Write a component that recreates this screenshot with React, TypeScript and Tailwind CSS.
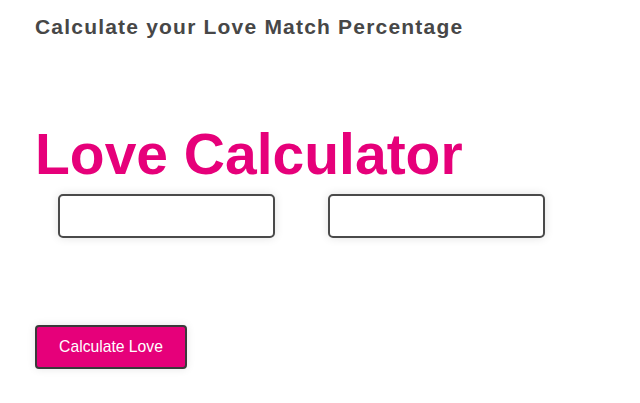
export default function App() {
  return (
    <div className="min-h-screen bg-white px-[35px] pt-[15px] font-['Liberation_Sans',Arial,sans-serif]">
      <h3 className="text-[21px] leading-[24px] font-bold tracking-[1.2px] text-[#474747]">
        Calculate your Love Match Percentage
      </h3>

      <h1 className="mt-[83px] text-[57px] leading-[64px] font-bold text-[#e6007a]">
        Love Calculator
      </h1>

      <div className="mt-[8px] flex gap-[53px] pl-[23px]">
        <input
          type="text"
          className="h-[44px] w-[217px] rounded-[5px] border-2 border-[#4a4a4a] bg-white shadow-[0_0_10px_rgba(0,0,0,0.12)] outline-none"
        />
        <input
          type="text"
          className="h-[44px] w-[217px] rounded-[5px] border-2 border-[#4a4a4a] bg-white shadow-[0_0_10px_rgba(0,0,0,0.12)] outline-none"
        />
      </div>

      <button className="mt-[87px] h-[44px] w-[152px] rounded-[4px] border-2 border-[#3a3a3a] bg-[#e6007a] text-[15.7px] text-white shadow-[0_0_8px_rgba(0,0,0,0.1)]">
        Calculate Love
      </button>
    </div>
  );
}
